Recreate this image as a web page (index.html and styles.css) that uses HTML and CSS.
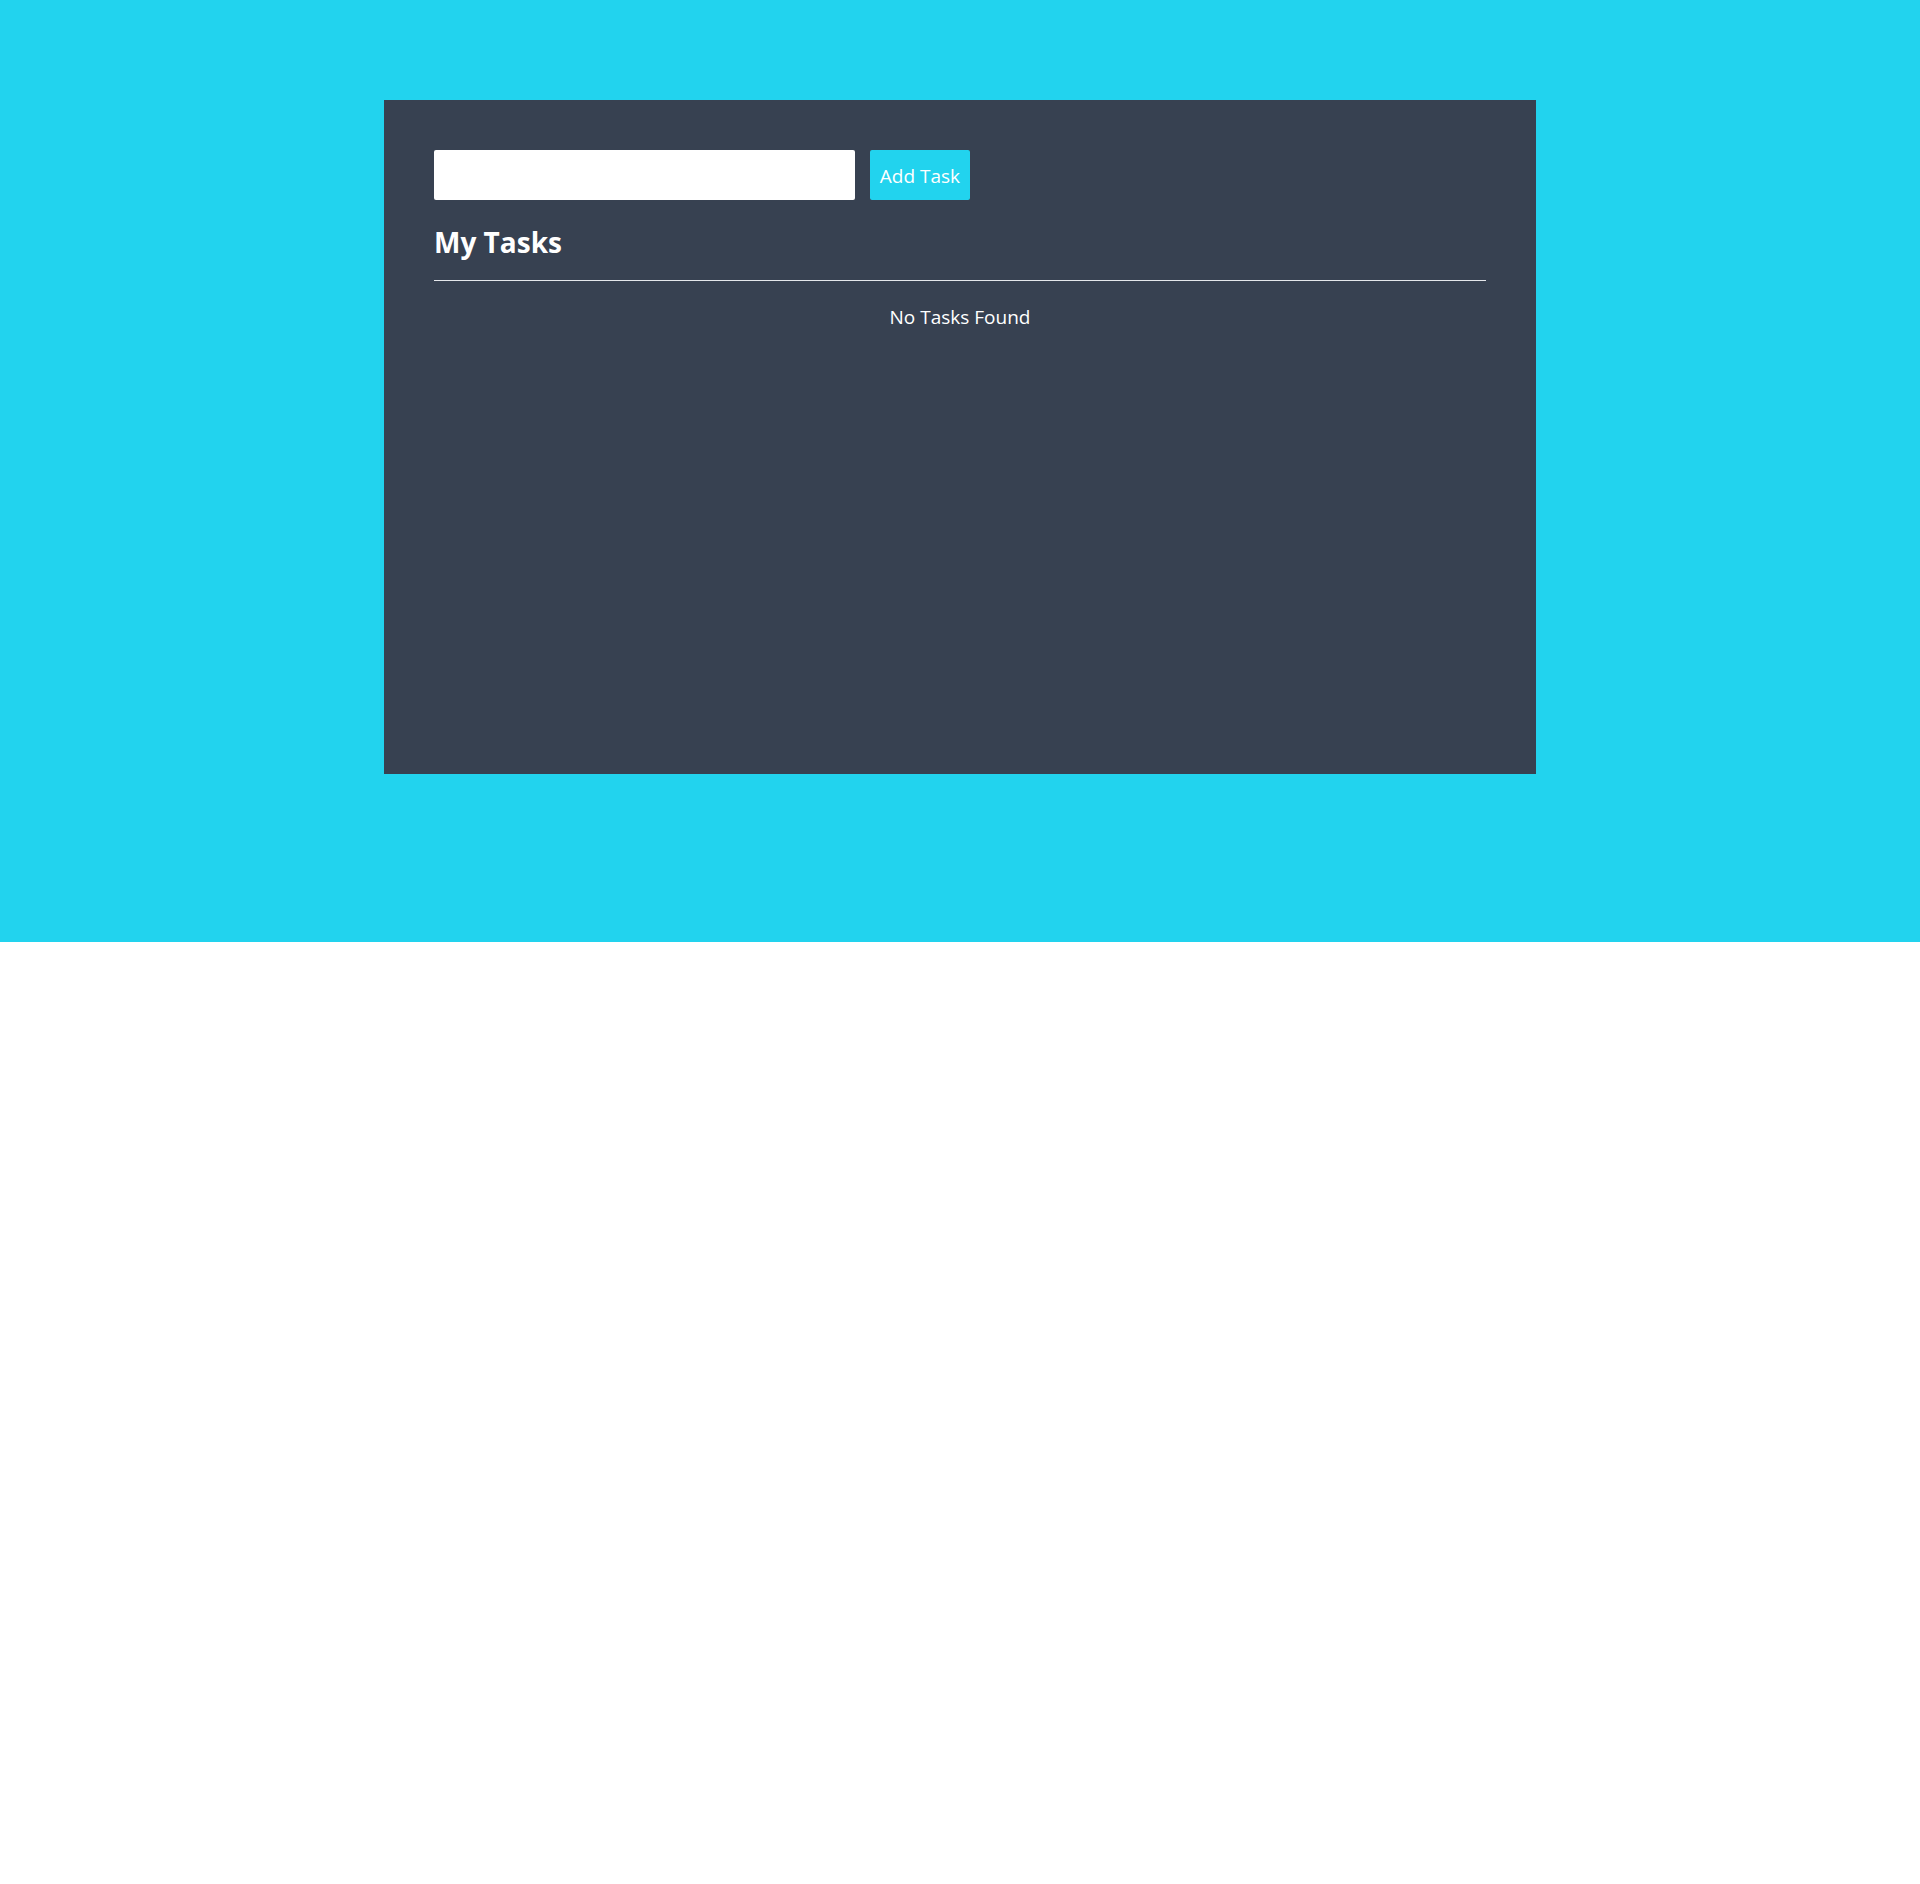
FILE: index.html
```html
<!DOCTYPE html>
<html lang="en">
<head>
<meta charset="utf-8">
<meta name="viewport" content="width=device-width, initial-scale=1">
<title>My Tasks</title>
<link rel="stylesheet" href="styles.css">
</head>
<body>
<div class="app">
  <main class="panel">
    <form class="task-form">
      <input class="task-input" type="text" aria-label="Task">
      <button class="task-button" type="button">Add Task</button>
    </form>
    <h1 class="title">My Tasks</h1>
    <p class="empty">No Tasks Found</p>
  </main>
</div>
</body>
</html>
```

FILE: styles.css
```css
*,
*::before,
*::after {
  box-sizing: border-box;
}

body {
  margin: 0;
  background: #fff;
  font-family: "Segoe UI", "Open Sans", "Noto Sans", sans-serif;
  font-size: 19px;
  line-height: 32px;
}

.app {
  min-height: 942px;
  padding: 100px 20%;
  background: #22d3ee;
}

.panel {
  min-height: 674px;
  padding: 50px;
  background: #374151;
  color: #fff;
}

.task-form {
  display: flex;
  gap: 15px;
}

.task-input {
  width: 40%;
  height: 50px;
  padding: 0 10px;
  border: 0;
  border-radius: 2px;
  background: #fff;
  font: inherit;
}

.task-button {
  height: 50px;
  padding: 2px 10px 0;
  border: 0;
  border-radius: 2px;
  background: #22d3ee;
  color: #fff;
  font: inherit;
  white-space: nowrap;
}

.title {
  margin: 20px 0;
  padding-bottom: 16px;
  border-bottom: 1px solid #e5e7eb;
  font-size: 28px;
  line-height: 44px;
}

.empty {
  margin: 0;
  text-align: center;
}
```
